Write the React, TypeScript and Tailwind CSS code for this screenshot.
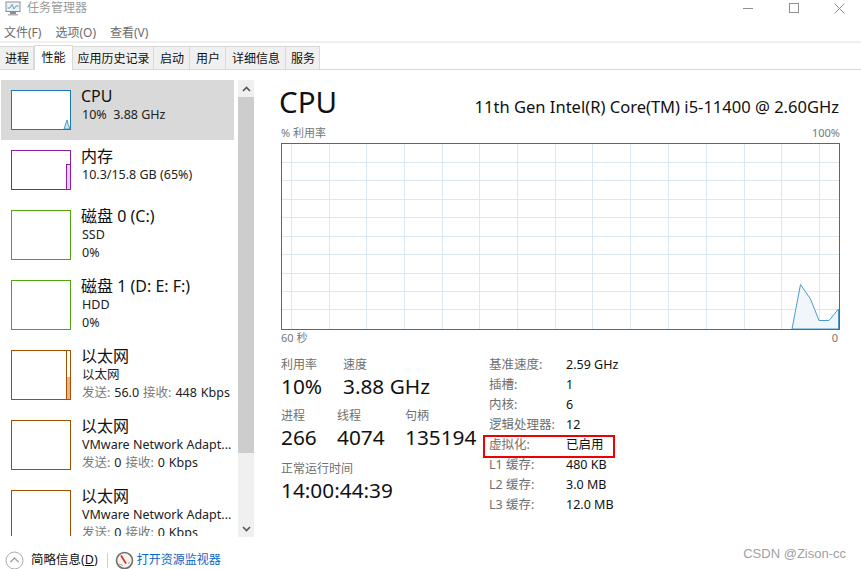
import { ReactNode } from "react";

const tabs = [
  { name: "进程", w: "w-[34px]" },
  { name: "性能", w: "w-[39px]", active: true },
  { name: "应用历史记录", w: "w-[81px]" },
  { name: "启动", w: "w-[36px]" },
  { name: "用户", w: "w-[36px]" },
  { name: "详细信息", w: "w-[60px]" },
  { name: "服务", w: "w-[34px]" },
];

const vLines = [291, 329, 366, 404, 442, 479, 517, 555, 592, 630, 668, 706, 744, 781, 819];
const hLines = [162, 180, 199, 217, 236, 254, 273, 291, 309];

function Thumb({ color, children }: { color: string; children?: ReactNode }) {
  return (
    <div className={`relative shrink-0 w-[60px] overflow-hidden border bg-white ${color}`}>
      {children}
    </div>
  );
}

function Item({
  title,
  lines,
  color,
  h,
  selected,
  graph,
}: {
  title: string;
  lines: ReactNode[];
  color: string;
  h: string;
  selected?: boolean;
  graph?: ReactNode;
}) {
  return (
    <div className={`flex shrink-0 gap-[10px] pl-[10px] pt-[10px] pb-[10px] ${selected ? "bg-[#d9d9d9]" : ""}`}>
      <div className={`flex ${h}`}>
        <Thumb color={color}>{graph}</Thumb>
      </div>
      <div className="-mb-[4px] flex min-w-0 flex-col">
        <div className="-mt-[4px] h-[20px] text-[16px] leading-[20px] whitespace-nowrap text-[#111]">{title}</div>
        {lines.map((l, i) => (
          <div key={i} className="h-[18px] pl-[1px] text-[12.5px] leading-[18px] whitespace-nowrap text-[#222]">
            {l}
          </div>
        ))}
      </div>
    </div>
  );
}

function Traffic({ send, recv }: { send: string; recv: string }) {
  return (
    <span className="[word-spacing:0.7px]">
      <span className="text-[#7a7a7a]">发送:</span> {send} <span className="text-[#7a7a7a]">接收:</span> {recv} Kbps
    </span>
  );
}

function Stat({ label, value, w, tight }: { label: string; value: string; w: string; tight?: boolean }) {
  return (
    <div className={`${w} ${tight ? "pb-[1px]" : ""}`}>
      <div className={`text-[12px] text-[#6f6f6f] ${tight ? "h-[16px] leading-[16px]" : "h-[17px] leading-[17px]"}`}>
        {label}
      </div>
      <div className="h-[27px] text-[20.8px] leading-[27px] whitespace-nowrap text-[#111]">{value}</div>
    </div>
  );
}

const info = [
  ["基准速度:", "2.59 GHz"],
  ["插槽:", "1"],
  ["内核:", "6"],
  ["逻辑处理器:", "12"],
  ["虚拟化:", "已启用"],
  ["L1 缓存:", "480 KB"],
  ["L2 缓存:", "3.0 MB"],
  ["L3 缓存:", "12.0 MB"],
];

export default function App() {
  return (
    <div
      className="flex h-[569px] w-[861px] flex-col overflow-hidden bg-white text-[12.5px] text-[#222]"
      style={{ fontFamily: '"Noto Sans", "Noto Sans CJK SC", sans-serif' }}
    >
      {/* 标题栏 */}
      <div className="flex h-[16px] shrink-0 items-center pl-[5px]">
        <svg width="16" height="15" viewBox="0 0 16 15" className="shrink-0">
          <rect x="1" y="1" width="14" height="9.5" fill="#eef3f7" stroke="#8a8f94" />
          <path d="M2.5 7 L5 7 L7 3.5 L9 8 L11 5 L13.5 5" fill="none" stroke="#5b9bc8" />
          <rect x="5" y="11" width="6" height="2" fill="#8a8f94" />
          <rect x="3" y="13" width="10" height="1.5" fill="#b0b4b8" />
        </svg>
        <span className="ml-[6px] text-[12px] leading-[16px] text-[#9b9b9b]">任务管理器</span>
        <div className="ml-auto flex items-center">
          <div className="h-px w-[10px] bg-[#8f8f8f]" />
          <div className="ml-[36px] h-[10px] w-[10px] border border-[#8f8f8f]" />
          <svg width="11" height="11" viewBox="0 0 11 11" className="mr-[16px] ml-[35px]">
            <path d="M0.5 0.5 L10.5 10.5 M10.5 0.5 L0.5 10.5" stroke="#8f8f8f" />
          </svg>
        </div>
      </div>

      {/* 菜单 */}
      <div className="flex h-[25px] shrink-0 items-center gap-[14px] pt-[9px] pl-[4px] text-[12px] text-[#6b6b6b]">
        <span>文件(F)</span>
        <span>选项(O)</span>
        <span>查看(V)</span>
      </div>
      <div className="h-[2px] shrink-0 bg-[#f0f0f0]" />

      {/* 标签页 */}
      <div className="flex h-[27px] shrink-0 items-end border-b border-[#d9d9d9] text-[12px]">
        {tabs.map((t) =>
          t.active ? (
            <div
              key={t.name}
              className={`${t.w} -mb-px flex h-[25px] shrink-0 items-center justify-center border border-b-0 border-[#d9d9d9] bg-white pb-[1px] text-[#111]`}
            >
              {t.name}
            </div>
          ) : (
            <div
              key={t.name}
              className={`${t.w} flex h-[23px] shrink-0 items-center justify-center border-r border-t border-[#d9d9d9] bg-[#f0f0f0] pt-[2px] pl-[1px] text-[#111]`}
            >
              {t.name}
            </div>
          ),
        )}
      </div>

      {/* 主体 */}
      <div className="flex h-[467px] shrink-0 pt-[10px]">
        {/* 左侧列表 */}
        <div className="flex h-[456px] w-[238px] shrink-0 flex-col overflow-hidden pl-[1px] pr-[4px]">
          <Item
            selected
            title="CPU"
            h="h-[40px]"
            color="border-[#1a7ab5]"
            lines={["10%\u00a0 3.88 GHz"]}
            graph={
              <svg width="58" height="38" className="absolute inset-0">
                <path d="M52 38 L55 29 L56 33 L58 38 Z" fill="#cfe3f1" stroke="#4b9ccc" />
              </svg>
            }
          />
          <Item
            title="内存"
            h="h-[40px]"
            color="border-[#8c1ea8]"
            lines={["10.3/15.8 GB (65%)"]}
            graph={
              <div className="absolute right-0 bottom-0 h-[25px] w-[4px] border-t border-l border-[#8c1ea8] bg-[#e6cdeb]" />
            }
          />
          <Item title="磁盘 0 (C:)" h="h-[50px]" color="border-[#4ea60f]" lines={["SSD", "0%"]} />
          <Item title="磁盘 1 (D: E: F:)" h="h-[50px]" color="border-[#4ea60f]" lines={["HDD", "0%"]} />
          <Item
            title="以太网"
            h="h-[50px]"
            color="border-[#a74f01]"
            lines={["以太网", <Traffic send="56.0" recv="448" />]}
            graph={
              <>
                <div className="absolute top-0 right-[3px] bottom-0 w-px bg-[#a74f01]" />
                <div className="absolute right-0 bottom-0 h-[22px] w-[3px] bg-[#e8b48a]" />
              </>
            }
          />
          <Item
            title="以太网"
            h="h-[50px]"
            color="border-[#a74f01]"
            lines={["VMware Network Adapt...", <Traffic send="0" recv="0" />]}
          />
          <Item
            title="以太网"
            h="h-[50px]"
            color="border-[#a74f01]"
            lines={["VMware Network Adapt...", <Traffic send="0" recv="0" />]}
          />
        </div>

        {/* 滚动条 */}
        <div className="flex h-[457px] w-[16px] shrink-0 flex-col bg-[#f0f0f0]">
          <div className="flex h-[17px] shrink-0 items-center justify-center">
            <svg width="9" height="6" viewBox="0 0 9 6">
              <path d="M1 5 L4.5 1.5 L8 5" fill="none" stroke="#555" strokeWidth="1.6" />
            </svg>
          </div>
          <div className="h-[356px] shrink-0 bg-[#cdcdcd]" />
          <div className="mt-auto flex h-[17px] shrink-0 items-center justify-center">
            <svg width="9" height="6" viewBox="0 0 9 6">
              <path d="M1 1 L4.5 4.5 L8 1" fill="none" stroke="#555" strokeWidth="1.6" />
            </svg>
          </div>
        </div>

        {/* 右侧详情 */}
        <div className="ml-[27px] flex w-[559px] shrink-0 flex-col">
          <div className="flex h-[43px] items-end justify-between">
            <span className="-ml-[2px] text-[29.5px] leading-[43px] text-[#111]">CPU</span>
            <span className="pb-[4px] pr-[1px] text-[16.55px] leading-[24px] text-[#111]">
              11th Gen Intel(R) Core(TM) i5-11400 @ 2.60GHz
            </span>
          </div>
          <div className="mt-[1px] flex h-[18px] items-center justify-between text-[11px] text-[#777]">
            <span>% 利用率</span>
            <span>100%</span>
          </div>
          <svg width="559" height="187" viewBox="281 143 559 187" className="mt-[1px] shrink-0">
            {vLines.map((x) => (
              <line key={x} x1={x + 0.5} x2={x + 0.5} y1="143" y2="329" stroke="#dbe8f2" />
            ))}
            {hLines.map((y) => (
              <line key={y} x1="281" x2="839" y1={y + 0.5} y2={y + 0.5} stroke="#dbe8f2" />
            ))}
            <path
              d="M792 329 L800.5 284.5 L810.5 299 L819 320.5 L829 320.5 L838.5 309 L838.5 329 Z"
              fill="#f1f6fa"
              stroke="#4b9ccc"
            />
            <rect x="281.5" y="143.5" width="558" height="186" fill="none" stroke="#1a7ab5" />
          </svg>
          <div className="flex h-[17px] items-center justify-between text-[11px] text-[#777]">
            <span>60 秒</span>
            <span className="pr-[2px]">0</span>
          </div>

          <div className="mt-[10px] flex">
            <div className="w-[208px] shrink-0">
              <div className="flex">
                <Stat tight label="利用率" value="10%" w="w-[62px]" />
                <Stat tight label="速度" value="3.88 GHz" w="w-[120px]" />
              </div>
              <div className="mt-[7px] flex">
                <Stat tight label="进程" value="266" w="w-[56px]" />
                <Stat tight label="线程" value="4074" w="w-[68px]" />
                <Stat tight label="句柄" value="135194" w="w-[80px]" />
              </div>
              <div className="mt-[8px]">
                <Stat label="正常运行时间" value="14:00:44:39" w="w-[150px]" />
              </div>
            </div>
            <div className="-mt-[2px] flex flex-col">
              {info.map(([k, v]) => (
                <div key={k} className="relative flex h-[20px] w-[131px] items-center whitespace-nowrap">
                  <span className="w-[77px] shrink-0 text-[#6f6f6f]">{k}</span>
                  <span className="text-[#111]">{v}</span>
                  {k === "虚拟化:" && (
                    <div className="absolute top-0 -left-[6px] h-[23px] w-[132px] border-2 border-[#f00000]" />
                  )}
                </div>
              ))}
            </div>
          </div>
        </div>
      </div>

      {/* 底栏 */}
      <div className="relative flex min-h-0 flex-1 items-center pt-[14px] pl-[5px]">
        <svg width="19" height="19" viewBox="0 0 19 19">
          <circle cx="9.5" cy="9.5" r="8.5" fill="#fff" stroke="#a8a8a8" />
          <path d="M5.5 11 L9.5 7 L13.5 11" fill="none" stroke="#a0a0a0" strokeWidth="1.4" />
        </svg>
        <span className="ml-[7px] text-[12.5px] text-[#111]">
          简略信息(<span className="underline">D</span>)
        </span>
        <div className="ml-[9px] h-[15px] w-px bg-[#cfcfcf]" />
        <svg width="19" height="19" viewBox="0 0 19 19" className="ml-[7px]">
          <circle cx="9.5" cy="9.5" r="8" fill="#f6f3ee" stroke="#6f6f6f" strokeWidth="1.6" />
          <path d="M6 4.5 L11 12.5" stroke="#d62a2a" strokeWidth="1.6" />
          <path d="M4 13 L8 14.5 M13 13 L15 11" stroke="#a8a8a8" />
        </svg>
        <span className="ml-[3px] text-[12px] text-[#0a66c8]">打开资源监视器</span>
        <span className="absolute right-[15px] bottom-[6px] font-['Liberation_Sans'] text-[13px] text-[#a0a0a0]">
          CSDN @Zison-cc
        </span>
      </div>
    </div>
  );
}
